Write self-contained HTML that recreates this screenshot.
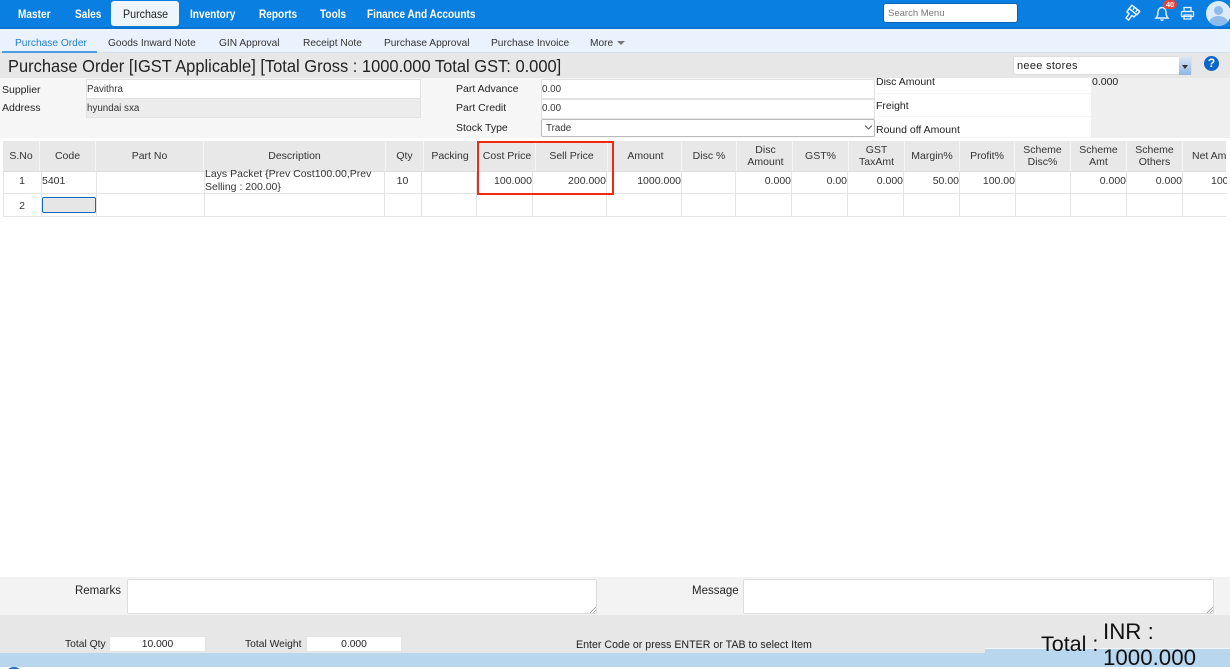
<!DOCTYPE html>
<html><head><meta charset="utf-8"><style>
*{box-sizing:border-box}
html,body{margin:0;padding:0;width:1230px;height:669px;overflow:hidden;background:#fff;font-family:"Liberation Sans",sans-serif;color:#222}
#w{position:relative;width:1230px;height:669px;overflow:hidden}
.a{position:absolute}
.t{position:absolute;white-space:nowrap;line-height:14px;transform-origin:left center}
.n{font-size:12px;font-weight:bold;color:#fff;top:7px;transform:scaleX(.84)}
.s{font-size:10.5px;color:#333;top:36px;transform:scaleX(.97)}
.l{font-size:10.5px;color:#222}
.h{position:absolute;top:141px;height:30px;background:#e8e8e8;border-right:1px solid #f4f4f4;font-size:10.5px;line-height:12.5px;color:#333;display:flex;align-items:center;justify-content:center;text-align:center;white-space:nowrap;overflow:hidden}
.c{position:absolute;font-size:10.5px;color:#333;line-height:12.5px;height:14px;white-space:nowrap;text-align:right}
.v{position:absolute;width:1px;background:#e4e4e4;top:171px;height:45px}
.ib{position:absolute;background:#fff;border:1px solid #e2e2e2}
</style></head><body><div id="w">
<div class="a" style="left:0;top:0;width:1230px;height:29px;background:#0a7fe2;border-bottom:2px solid #0873cf"></div>
<div class="a" style="left:111px;top:1px;width:68px;height:25px;background:#eef5fd;border-radius:3px"></div>
<div class="t n" style="left:18px">Master</div>
<div class="t n" style="left:75px">Sales</div>
<div class="t n" style="left:123px;color:#222;font-weight:normal;font-size:12px;transform:scaleX(.89)">Purchase</div>
<div class="t n" style="left:190px">Inventory</div>
<div class="t n" style="left:259px">Reports</div>
<div class="t n" style="left:320px">Tools</div>
<div class="t n" style="left:367px">Finance And Accounts</div>
<div class="a" style="left:883px;top:3px;width:135px;height:20px;background:#fff;border-radius:3px;border:1px solid #0a62b0"></div>
<div class="t" style="left:888px;top:7px;font-size:9.500px;color:#777">Search Menu</div>
<svg class="a" style="left:1123px;top:3px" width="19" height="19" viewBox="0 0 17 17" fill="none" stroke="#e8f3ff" stroke-width="1.300" stroke-linejoin="round"><path d="M8 2l7 5.500-2.500 3L5.500 5z"/><path d="M5.500 5L3.500 8l2 1.500-2.800 4 2.300 1.800 3-4.200 1.800 1.400 2.500-2.800"/><path d="M10.300 3.800l-1.300 2.200M12.800 5.800l-1.300 2.200"/></svg>
<svg class="a" style="left:1153px;top:4px" width="18" height="18" viewBox="0 0 18 18" fill="none" stroke="#e8f3ff" stroke-width="1.400"><path d="M3 14h12c-1.500-1.500-2-3-2-6 0-2.500-1.800-4.500-4-4.500S5 5.500 5 8c0 3-.5 4.500-2 6z"/><path d="M7.500 15.500c.8 1 2.200 1 3 0"/></svg>
<div class="a" style="left:1163px;top:0;width:14px;height:9px;background:#e8413a;border-radius:5px;color:#fff;font-size:7.500px;font-weight:bold;line-height:9px;text-align:center">40</div>
<svg class="a" style="left:1180px;top:6px" width="15" height="15" viewBox="0 0 15 15" fill="none" stroke="#e8f3ff" stroke-width="1.300"><rect x="4" y="1.500" width="7" height="4"/><rect x="1.500" y="5.500" width="12" height="5" rx="1"/><rect x="4" y="9" width="7" height="4"/></svg>
<div class="a" style="left:1206px;top:1px;width:25px;height:25px;border-radius:50%;background:#dcebfb;overflow:hidden"><div class="a" style="left:8px;top:5px;width:9px;height:9px;border-radius:50%;background:#8dbcec"></div><div class="a" style="left:3px;top:15px;width:19px;height:14px;border-radius:50%;background:#8dbcec"></div></div>

<div class="a" style="left:0;top:29px;width:1230px;height:24px;background:#e9f2fd;border-bottom:1px solid #d5e0ea"></div>
<div class="a" style="left:2px;top:51px;width:95px;height:2px;background:#4c9be3"></div>
<div class="t s" style="left:15px;color:#1f7fd8">Purchase Order</div>
<div class="t s" style="left:108px">Goods Inward Note</div>
<div class="t s" style="left:219px">GIN Approval</div>
<div class="t s" style="left:303px">Receipt Note</div>
<div class="t s" style="left:384px">Purchase Approval</div>
<div class="t s" style="left:491px">Purchase Invoice</div>
<div class="t s" style="left:590px">More</div>
<div class="a" style="left:617px;top:41px;border:4px solid transparent;border-top:4px solid #777;border-bottom:0"></div>

<div class="a" style="left:0;top:53px;width:1230px;height:25px;background:#e7e7e7"></div>
<div class="t" style="left:8px;top:57px;font-size:17.300px;line-height:18px;color:#222;transform:scaleX(.953)">Purchase Order [IGST Applicable] [Total Gross : 1000.000 Total GST: 0.000]</div>
<div class="a" style="left:1013px;top:56px;width:179px;height:19px;background:#fff;border:1px solid #ddd;border-radius:2px"></div>
<div class="t" style="left:1017px;top:59px;font-size:11px;letter-spacing:.3px">neee stores</div>
<div class="a" style="left:1179px;top:56px;width:12px;height:19px;background:linear-gradient(#dfe8f3,#8fb6e4)"></div>
<div class="a" style="left:1182px;top:65px;border:3px solid transparent;border-top:4px solid #333;border-bottom:0"></div>
<div class="a" style="left:1204px;top:56px;width:15px;height:15px;border-radius:50%;background:#0a66c8;color:#fff;font-size:12px;font-weight:bold;text-align:center;line-height:15px">?</div>

<div class="a" style="left:0;top:78px;width:1230px;height:60px;background:#f6f6f6"></div>
<div class="t l" style="left:2px;top:83px">Supplier</div>
<div class="t l" style="left:2px;top:101px">Address</div>
<div class="ib" style="left:86px;top:79px;width:335px;height:20px"></div>
<div class="ib" style="left:86px;top:98px;width:335px;height:20px;background:#ececec"></div>
<div class="t" style="left:87px;top:83px;font-size:9.800px;color:#333">Pavithra</div>
<div class="t" style="left:87px;top:102px;font-size:9.800px;color:#333">hyundai sxa</div>
<div class="t l" style="left:456px;top:82px">Part Advance</div>
<div class="t l" style="left:456px;top:101px">Part Credit</div>
<div class="t l" style="left:456px;top:121px">Stock Type</div>
<div class="ib" style="left:541px;top:79px;width:334px;height:20px"></div>
<div class="ib" style="left:541px;top:99px;width:334px;height:20px"></div>
<div class="a" style="left:541px;top:119px;width:334px;height:18px;background:#fff;border:1px solid #bbb;border-radius:2px"></div>
<div class="t" style="left:542px;top:83px;font-size:9.800px;color:#333">0.00</div>
<div class="t" style="left:542px;top:102px;font-size:9.800px;color:#333">0.00</div>
<div class="t" style="left:546px;top:122px;font-size:9.800px;color:#333">Trade</div>
<svg class="a" style="left:864px;top:124px" width="9" height="7" viewBox="0 0 9 7" fill="none" stroke="#555"><path d="M1 1.500l3.500 3.500 3.500-3.500"/></svg>
<div class="a" style="left:875px;top:78px;width:216px;height:15px;background:#fff"></div>
<div class="a" style="left:875px;top:94px;width:216px;height:22px;background:#fff"></div>
<div class="a" style="left:875px;top:117px;width:216px;height:20px;background:#fff"></div>
<div class="a" style="left:1091px;top:78px;width:139px;height:60px;background:#efefef"></div>
<div class="t l" style="left:876px;top:75px;clip-path:inset(3px 0 0 0)">Disc Amount</div>
<div class="t l" style="left:1092px;top:75px;clip-path:inset(3px 0 0 0)">0.000</div>
<div class="t l" style="left:876px;top:99px">Freight</div>
<div class="t l" style="left:876px;top:123px">Round off Amount</div>

<div class="h" style="left:3px;width:37px">S.No</div>
<div class="h" style="left:40px;width:56px">Code</div>
<div class="h" style="left:96px;width:108px">Part No</div>
<div class="h" style="left:204px;width:182px">Description</div>
<div class="h" style="left:386px;width:38px">Qty</div>
<div class="h" style="left:424px;width:53px">Packing</div>
<div class="h" style="left:477px;width:59px;padding-left:2px">Cost Price</div>
<div class="h" style="left:536px;width:72px">Sell Price</div>
<div class="h" style="left:608px;width:74px;padding-left:2px">Amount</div>
<div class="h" style="left:682px;width:55px">Disc %</div>
<div class="h" style="left:737px;width:56px;padding-left:2px">Disc<br>Amount</div>
<div class="h" style="left:793px;width:56px">GST%</div>
<div class="h" style="left:849px;width:56px">GST<br>TaxAmt</div>
<div class="h" style="left:905px;width:55px">Margin%</div>
<div class="h" style="left:960px;width:55px">Profit%</div>
<div class="h" style="left:1015px;width:56px">Scheme<br>Disc%</div>
<div class="h" style="left:1071px;width:56px">Scheme<br>Amt</div>
<div class="h" style="left:1127px;width:56px">Scheme<br>Others</div>
<div class="h" style="left:1183px;width:43px;justify-content:flex-start;padding-left:9px;border-right:0">Net Am</div>

<div class="a" style="left:3px;top:171px;width:1223px;height:1px;background:#ddd"></div>
<div class="a" style="left:3px;top:193px;width:1223px;height:1px;background:#e4e4e4"></div>
<div class="a" style="left:3px;top:216px;width:1223px;height:1px;background:#e4e4e4"></div>
<div class="v" style="left:3px"></div><div class="v" style="left:41px"></div><div class="v" style="left:96px"></div><div class="v" style="left:204px"></div><div class="v" style="left:384px"></div><div class="v" style="left:421px"></div><div class="v" style="left:476px"></div><div class="v" style="left:532px"></div><div class="v" style="left:606px"></div><div class="v" style="left:681px"></div><div class="v" style="left:735px"></div><div class="v" style="left:791px"></div><div class="v" style="left:847px"></div><div class="v" style="left:903px"></div><div class="v" style="left:959px"></div><div class="v" style="left:1015px"></div><div class="v" style="left:1070px"></div><div class="v" style="left:1126px"></div><div class="v" style="left:1182px"></div>

<div class="c" style="left:3px;width:38px;top:175px;text-align:center">1</div>
<div class="c" style="left:3px;width:38px;top:200px;text-align:center">2</div>
<div class="c" style="left:42px;top:175px;text-align:left">5401</div>
<div class="c" style="left:205px;top:168px;height:26px;text-align:left"><span style="display:block;height:13px">Lays Packet {Prev Cost100.00,Prev</span><span style="display:block">Selling : 200.00}</span></div>
<div class="c" style="left:384px;width:37px;top:175px;text-align:center">10</div>
<div class="c" style="left:476px;width:56px;top:175px">100.000</div>
<div class="c" style="left:532px;width:74px;top:175px">200.000</div>
<div class="c" style="left:606px;width:75px;top:175px">1000.000</div>
<div class="c" style="left:735px;width:56px;top:175px">0.000</div>
<div class="c" style="left:791px;width:56px;top:175px">0.00</div>
<div class="c" style="left:847px;width:56px;top:175px">0.000</div>
<div class="c" style="left:903px;width:56px;top:175px">50.00</div>
<div class="c" style="left:959px;width:56px;top:175px">100.00</div>
<div class="c" style="left:1070px;width:56px;top:175px">0.000</div>
<div class="c" style="left:1126px;width:56px;top:175px">0.000</div>
<div class="c" style="left:1211px;width:16px;top:175px;overflow:hidden;text-align:left">100</div>
<div class="a" style="left:42px;top:197px;width:54px;height:16px;background:#e6e6e6;border:1px solid #1168bd;border-radius:2px"></div>
<div class="a" style="left:477px;top:141px;width:137px;height:54px;border:2px solid #f02a12;z-index:5"></div>

<div class="a" style="left:0;top:577px;width:1230px;height:38px;background:#f3f3f3"></div>
<div class="a" style="left:0;top:615px;width:1230px;height:38px;background:#e7e7e7"></div>
<div class="a" style="left:0;top:653px;width:1230px;height:14px;background:#b9d6ef"></div>
<div class="a" style="left:985px;top:648px;width:245px;height:5px;background:#b9d6ef;border-top:1px solid #f4f8fc"></div>
<div class="a" style="left:5px;top:667px;width:18px;height:18px;border-radius:50%;background:#1b6fc0"></div>
<div class="t" style="right:1109px;top:584px;font-size:11.500px">Remarks</div>
<div class="ib" style="left:127px;top:579px;width:470px;height:35px;border-color:#ddd;border-radius:2px"></div>
<div class="t" style="left:692px;top:584px;font-size:11.500px">Message</div>
<div class="ib" style="left:743px;top:579px;width:471px;height:35px;border-color:#ddd;border-radius:2px"></div>
<svg class="a" style="left:590px;top:607px" width="6" height="6"><path d="M0 6l6-6M3 6l3-3" stroke="#888" stroke-width=".7"/></svg>
<svg class="a" style="left:1207px;top:607px" width="6" height="6"><path d="M0 6l6-6M3 6l3-3" stroke="#888" stroke-width=".7"/></svg>
<div class="t" style="left:65px;top:638px;font-size:10.300px">Total Qty</div>
<div class="ib" style="left:109px;top:636px;width:97px;height:16px;border-color:#e4e4e4"></div>
<div class="t" style="left:109px;width:97px;text-align:center;top:638px;font-size:10.300px">10.000</div>
<div class="t" style="left:245px;top:638px;font-size:10.300px">Total Weight</div>
<div class="ib" style="left:306px;top:636px;width:96px;height:16px;border-color:#e4e4e4"></div>
<div class="t" style="left:306px;width:96px;text-align:center;top:638px;font-size:10.300px">0.000</div>
<div class="t" style="left:576px;top:638px;font-size:10.800px;transform:scaleX(.987)">Enter Code or press ENTER or TAB to select Item</div>
<div class="t" style="left:1041px;top:632px;font-size:21.500px;line-height:24px;color:#111">Total :</div>
<div class="t" style="left:1103px;top:619px;font-size:22.300px;line-height:26px;color:#111">INR :<br>1000.000</div>
</div></body></html>
